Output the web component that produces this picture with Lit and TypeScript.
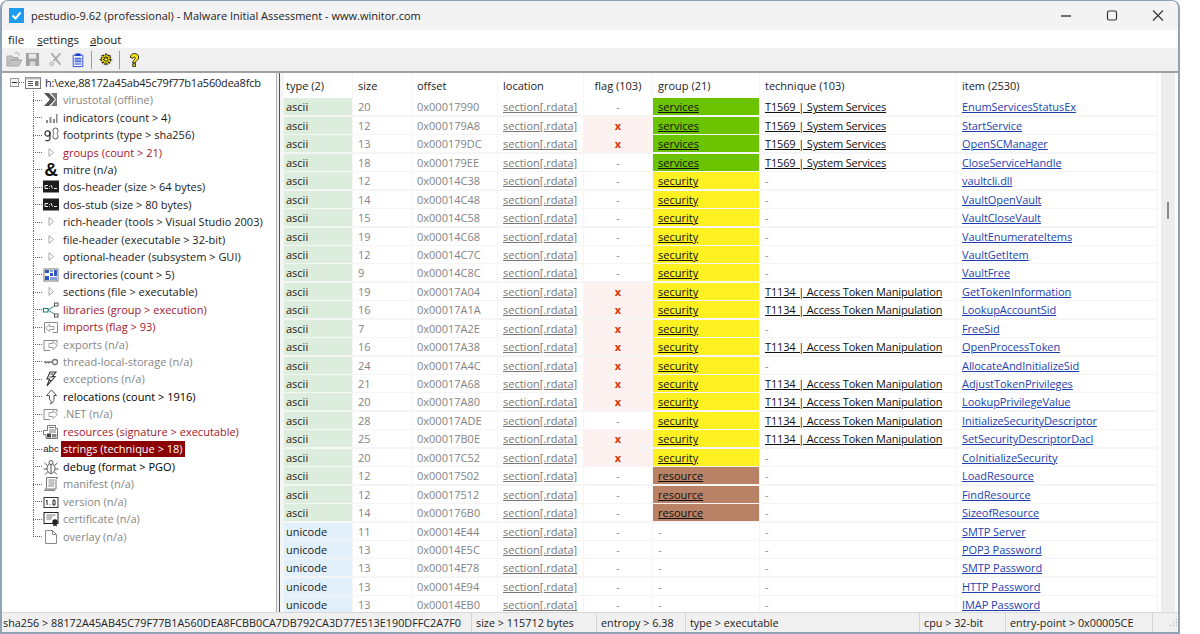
import { LitElement, html, css, svg } from "lit";
import { customElement } from "lit/decorators.js";

type Row = [string, string, string, boolean, string, string, string];
const T69 = "T1569 | System Services";
const T34 = "T1134 | Access Token Manipulation";
const rows: Row[] = [
  ["ascii","20","0x00017990",false,"services",T69,"EnumServicesStatusEx"],
  ["ascii","12","0x000179A8",true,"services",T69,"StartService"],
  ["ascii","13","0x000179DC",true,"services",T69,"OpenSCManager"],
  ["ascii","18","0x000179EE",false,"services",T69,"CloseServiceHandle"],
  ["ascii","12","0x00014C38",false,"security","","vaultcli.dll"],
  ["ascii","14","0x00014C48",false,"security","","VaultOpenVault"],
  ["ascii","15","0x00014C58",false,"security","","VaultCloseVault"],
  ["ascii","19","0x00014C68",false,"security","","VaultEnumerateItems"],
  ["ascii","12","0x00014C7C",false,"security","","VaultGetItem"],
  ["ascii","9","0x00014C8C",false,"security","","VaultFree"],
  ["ascii","19","0x00017A04",true,"security",T34,"GetTokenInformation"],
  ["ascii","16","0x00017A1A",true,"security",T34,"LookupAccountSid"],
  ["ascii","7","0x00017A2E",true,"security","","FreeSid"],
  ["ascii","16","0x00017A38",true,"security",T34,"OpenProcessToken"],
  ["ascii","24","0x00017A4C",true,"security","","AllocateAndInitializeSid"],
  ["ascii","21","0x00017A68",true,"security",T34,"AdjustTokenPrivileges"],
  ["ascii","20","0x00017A80",true,"security",T34,"LookupPrivilegeValue"],
  ["ascii","28","0x00017ADE",false,"security",T34,"InitializeSecurityDescriptor"],
  ["ascii","25","0x00017B0E",true,"security",T34,"SetSecurityDescriptorDacl"],
  ["ascii","20","0x00017C52",true,"security","","CoInitializeSecurity"],
  ["ascii","12","0x00017502",false,"resource","","LoadResource"],
  ["ascii","12","0x00017512",false,"resource","","FindResource"],
  ["ascii","14","0x000176B0",false,"resource","","SizeofResource"],
  ["unicode","11","0x00014E44",false,"","","SMTP Server"],
  ["unicode","13","0x00014E5C",false,"","","POP3 Password"],
  ["unicode","13","0x00014E78",false,"","","SMTP Password"],
  ["unicode","13","0x00014E94",false,"","","HTTP Password"],
  ["unicode","13","0x00014EB0",false,"","","IMAP Password"],
];

const headers: [string, string][] = [
  ["type (2)", "first"], ["size", ""], ["offset", ""], ["location", ""],
  ["flag (103)", "ctr"], ["group (21)", ""], ["technique (103)", ""], ["item (2530)", ""],
];

const ico = (body: unknown) => html`<svg class="ic" viewBox="0 0 16 16" width="16" height="16">${body}</svg>`;

const arrow = svg`<path d="M6 3.500v8l4.500-4z" fill="#fff" stroke="#a8a8a8"/>`;
const win = svg`<path d="M1 13.500v-10h13v3M1 13.500h6" fill="#fff" stroke="#8a8a8a"/><path d="M6 6.500h4v-2l4.500 4-4.500 4v-2H6z" fill="#fff" stroke="#8a8a8a" stroke-width=".8"/>`;
const dos = svg`<rect x="0" y="1.500" width="16" height="12" fill="#1c1c1c"/><path d="M2 6.500h3M2 6.500v3h3M6.500 7v.8M6.500 9v.7M8 6l1.500 3.500M11 9.500h3" stroke="#eee" stroke-width="1" fill="none"/>`;

const icons: Record<string, unknown> = {
  virustotal: ico(svg`<path d="M1 1h5l6 6.500-6 6.500H1l6-6.500z" fill="#555"/><path d="M8 1h6v13H8l5-6.500z" fill="#777"/>`),
  indicators: ico(svg`<path d="M3 10h2v3H3zM6.500 7h2v6h-2zM10 9h2v4h-2zM13 4h1.500v9H13z" fill="#8a8a8a"/>`),
  footprints: ico(svg`<circle cx="4.500" cy="6.500" r="2.600" fill="none" stroke="#333" stroke-width="1.200"/><path d="M7 5v6.500c0 2-2 2.500-4.500 2" fill="none" stroke="#333" stroke-width="1.200"/><path d="M10 3.500a2.500 2.500 0 0 1 5 0c0 1.500-.8 2-.8 3 0 1 .8 1.500.8 3a2.500 2.500 0 0 1-5 0c0-1.500.8-2 .8-3 0-1-.8-1.500-.8-3z" fill="#fff" stroke="#555"/>`),
  arrow: ico(arrow),
  dos: ico(dos),
  directories: ico(svg`<rect x="1" y="2" width="14" height="12" fill="#fff" stroke="#777"/><path d="M2 3h4v3H2zM7 6h3v3H7zM2 9h4v4H2zM11 3h3v6h-3z" fill="#2c55c0"/><path d="M7 3h3v2H7zM7 10h7v3H7z" fill="#8aa0d8"/>`),
  libraries: ico(svg`<path d="M5 8l8-5M5 8l8 5" stroke="#3a8a80" fill="none"/><rect x="0.500" y="6.500" width="4.500" height="3.500" fill="#fff" stroke="#1d7a70"/><rect x="11.500" y="1" width="3.500" height="3" fill="#fff" stroke="#555"/><rect x="11.500" y="12" width="3.500" height="3" fill="#fff" stroke="#555"/>`),
  imports: ico(svg`<path d="M2.500 13.500h-1v-10h13v10h-5" fill="#fff" stroke="#8a8a8a"/><path d="M11 7.500H6.500v-2l-4 3.500 4 3.500v-2H11z" fill="#fff" stroke="#8a8a8a" stroke-width=".8"/>`),
  exports: ico(win),
  tls: ico(svg`<circle cx="12" cy="8" r="2.500" fill="none" stroke="#777" stroke-width="1.300"/><path d="M1 8h8.500M3 8v1.500M5.500 8v1.500" stroke="#777" stroke-width="1.500" fill="none"/>`),
  exceptions: ico(svg`<path d="M7 1h6L9.500 5.500H12L4 15l2.500-7H4z" fill="#fff" stroke="#333" stroke-width="1.100"/><path d="M7.500 3h3M6.500 6h3M6 9.500h2" stroke="#333"/>`),
  relocations: ico(svg`<path d="M8.500 1l5 5.500H11V10c0 2-1 4-3.500 5C9 13 8 11 6.500 10.500V6.500H3.500z" fill="#fff" stroke="#555"/>`),
  resources: ico(svg`<path d="M4.500 1.500h8v3h2v10H3v-4H.5v-4h4z" fill="#fff" stroke="#777"/><path d="M6 3.500h5M6 6h7M6 8h7" stroke="#777"/><rect x="4" y="9.500" width="4" height="4" fill="#444"/><rect x="9" y="10" width="4.500" height="3.500" fill="#888"/>`),
  debug: ico(svg`<ellipse cx="8" cy="9.500" rx="4" ry="5" fill="#fff" stroke="#555"/><circle cx="8" cy="3.500" r="2" fill="#fff" stroke="#555"/><path d="M4.500 6.500L1.500 4M11.500 6.500L14.500 4M4 10H.5M12 10h3.500M4.500 13L2 15.500M11.500 13L14 15.500M8 5v9.500" stroke="#555" fill="none"/>`),
  manifest: ico(svg`<path d="M3.500 1.500h11l-1.500 2v9.500H2.500l1-2z" fill="#fff" stroke="#777"/><path d="M5.500 4h6M5.500 6h6M5.500 8h6M5 10h6" stroke="#888"/><path d="M1 13.500h11v1.500H1z" fill="#888"/>`),
  version: ico(svg`<rect x="1" y="3.500" width="14" height="10" fill="#fff" stroke="#333"/><path d="M4 6v5M3 7l1-1M7 10.500v.7M10 6.200h2v4.800h-2z" stroke="#222" fill="none"/>`),
  certificate: ico(svg`<rect x="1" y="1.500" width="14" height="11" fill="#fff" stroke="#222"/><path d="M3.500 4h9M3.500 6h6M3.500 8h5" stroke="#777"/><circle cx="12" cy="11" r="2.700" fill="#222"/><path d="M10.500 13l-.5 2.500 2-1 2 1-.5-2.500" fill="#222"/>`),
  overlay: ico(svg`<path d="M2.500 1.500h7l4 4v9h-11z" fill="#fff" stroke="#8a8a8a"/><path d="M9.500 1.500v4h4" fill="none" stroke="#8a8a8a"/>`),
};

type Node = [string, string, string];
const nodes: Node[] = [
  ["virustotal (offline)", "gray", "virustotal"],
  ["indicators (count > 4)", "", "indicators"],
  ["footprints (type > sha256)", "", "footprints"],
  ["groups (count > 21)", "red", "arrow"],
  ["mitre (n/a)", "", "amp"],
  ["dos-header (size > 64 bytes)", "", "dos"],
  ["dos-stub (size > 80 bytes)", "", "dos"],
  ["rich-header (tools > Visual Studio 2003)", "", "arrow"],
  ["file-header (executable > 32-bit)", "", "arrow"],
  ["optional-header (subsystem > GUI)", "", "arrow"],
  ["directories (count > 5)", "", "directories"],
  ["sections (file > executable)", "", "arrow"],
  ["libraries (group > execution)", "red", "libraries"],
  ["imports (flag > 93)", "red", "imports"],
  ["exports (n/a)", "gray", "exports"],
  ["thread-local-storage (n/a)", "gray", "tls"],
  ["exceptions (n/a)", "gray", "exceptions"],
  ["relocations (count > 1916)", "dark", "relocations"],
  [".NET (n/a)", "gray", "exports"],
  ["resources (signature > executable)", "red", "resources"],
  ["strings (technique > 18)", "sel", "abc"],
  ["debug (format > PGO)", "dark", "debug"],
  ["manifest (n/a)", "gray", "manifest"],
  ["version (n/a)", "gray", "version"],
  ["certificate (n/a)", "gray", "certificate"],
  ["overlay (n/a)", "gray", "overlay"],
];

@customElement("app-root")
export class AppRoot extends LitElement {
  static styles = css`
    :host { display: block; width: 1200px; height: 634px; background: #fff; font-family: "Open Sans", "Liberation Sans", sans-serif; font-size: 11px; color: #1a1a1a; overflow: hidden; }
    .window { width: 1180px; height: 634px; box-sizing: border-box; display: flex; flex-direction: column; border: 1px solid #8fa3b5; border-width: 1px 2px 2px 2px; border-radius: 8px 8px 0 0; background: #f0f0f0; overflow: hidden; }
    .title { height: 29px; flex: none; background: #f3f3f3; display: flex; align-items: center; padding-left: 7px; gap: 7px; font-size: 11px; color: #222; }
    .appicon { width: 15px; height: 15px; flex: none; }
    .title .txt { flex: 1; white-space: nowrap; }
    .caps { display: flex; align-items: center; margin-right: -3px; flex: none; }
    .caps svg { display: block; }
    .menu { height: 18px; flex: none; background: #fff; display: flex; align-items: center; padding-left: 6px; gap: 11px; font-size: 11.5px; }
    .menu span:first-child { margin-right: 2px; }
    .toolbar { height: 23px; flex: none; background: #f0f0f0; display: flex; align-items: center; padding-left: 3px; border-bottom: 2px solid #a2a2a2; }
    .toolbar svg { display: block; flex: none; }
    .sep { width: 1px; height: 18px; background: #9a9a9a; flex: none; }
    .ml { margin-left: 6px; }
    .main { flex: 1; min-height: 0; display: flex; background: #f0f0f0; }
    .tree { width: 274px; flex: none; background: #fff; border-right: 1px solid #b0b0b0; padding-top: 1px; overflow: hidden; }
    .root { height: 17.46px; display: flex; align-items: center; white-space: nowrap; padding-left: 8px; }
    .root .lbl { margin-left: 2px; letter-spacing: -0.2px; }
    .exp { width: 7px; height: 7px; border: 1px solid #9a9a9a; flex: none; position: relative; background: #f4f4f4; }
    .exp::after { content: ""; position: absolute; left: 1px; right: 1px; top: 3px; height: 1px; background: #223; }
    .dots { width: 6px; flex: none; height: 1px; background: repeating-linear-gradient(to right, #666 0 1px, transparent 1px 2px); }
    .n { height: 17.46px; display: flex; align-items: center; white-space: nowrap; }
    .guide { width: 10px; height: 100%; margin-left: 31px; flex: none; background:
      repeating-linear-gradient(to bottom, #666 0 1px, transparent 1px 2px) left top / 1px 100% no-repeat,
      repeating-linear-gradient(to right, #666 0 1px, transparent 1px 2px) left center / 100% 1px no-repeat; }
    .n.last .guide { background:
      repeating-linear-gradient(to bottom, #666 0 1px, transparent 1px 2px) left top / 1px 50% no-repeat,
      repeating-linear-gradient(to right, #666 0 1px, transparent 1px 2px) left center / 100% 1px no-repeat; }
    .iconbox { width: 16px; height: 16px; flex: none; display: flex; align-items: center; justify-content: center; }
    .ic { display: block; }
    .amp { font-family: "Liberation Sans", sans-serif; font-weight: 700; font-size: 19px; line-height: 16px; color: #111; }
    .abc { font-family: "Liberation Sans", sans-serif; font-size: 9.500px; line-height: 16px; color: #222; }
    .lbl { margin-left: 2px; padding: 0 2px; line-height: 16px; }
    .gray { color: #868686; }
    .red { color: #a3172c; }
    .dark { color: #000; }
    .sel { background: #8b0000; color: #fff; }
    .pane { flex: 1; display: flex; min-width: 0; margin-left: 2px; border-left: 1px solid #555; background: #fff; overflow: hidden; }
    .grid { flex: none; width: 878px; box-sizing: border-box; padding-left: 4px; display: grid;
      grid-template-columns: 68px 58px 85px 85px 68px 106px 196px 200px;
      grid-template-rows: 24px; grid-auto-rows: 17px; column-gap: 1px; row-gap: 1.440px; background: #f5f5f5; overflow: hidden; align-content: start; }
    .h, .c { background: #fff; padding-left: 5px; white-space: nowrap; display: flex; align-items: center; line-height: 17px; overflow: hidden; }
    .h { color: #222; margin-bottom: -1.440px; }
    .h.first, .c.type { padding-left: 2px; }
    .h.ctr, .c.flag { justify-content: center; padding-left: 0; }
    .c.type { background: #dcedde; color: #222; }
    .c.type.u { background: #e1f0fb; }
    .c.num { color: #838383; }
    .c.loc { color: #777; text-decoration: underline; }
    .dash { color: #8a8a8a; }
    .c.flag.on { background: #fdf2f0; }
    .x { color: #d8320a; font-weight: 700; font-size: 11px; }
    .services { background: #6cc400; }
    .security { background: #fff022; }
    .resource { background: #b98266; }
    .g { color: #111; text-decoration: underline; }
    .t { color: #111; text-decoration: underline; letter-spacing: -0.15px; }
    .i { color: #1c3fb0; text-decoration: underline; letter-spacing: -0.07px; }
    .scroll { width: 14px; flex: none; margin: 0 3px; background: #ededed; display: flex; justify-content: center; padding-top: 129px; box-sizing: border-box; }
    .thumb { width: 2px; height: 17px; background: #8a8a8a; }
    .status { height: 19px; flex: none; background: #f0f0f0; display: flex; align-items: center; border-top: 1px solid #d8d8d8; color: #222; font-size: 10.8px; white-space: nowrap; }
    .status span { display: flex; align-items: center; height: 100%; padding-left: 4px; box-sizing: border-box; flex: none; border-right: 1px solid #d4d4d4; overflow: hidden; }
    .status span:first-child { padding-left: 1px; }
    .status svg { margin-left: 13px; }
  `;

  private toolbar() {
    return html`<div class="toolbar">
      <svg width="18" height="16" viewBox="0 0 18 16"><path d="M2 14V4h5l1 1.500h5V8H5.500L2 14h11.500L17 8H6" fill="#c4c4c4" stroke="#a8a8a8"/><path d="M10 1c2-1 4 0 4 2.500" stroke="#a8a8a8" fill="none"/></svg>
      <svg style="margin-left:2px" width="15" height="15" viewBox="0 0 16 16"><path d="M1 1h14v14H1z" fill="#a0a0a0"/><rect x="4" y="2" width="8" height="5" fill="#e8e8e8"/><rect x="5" y="10" width="6" height="5" fill="#d8d8d8"/></svg>
      <svg style="margin-left:9px" width="14" height="15" viewBox="0 0 16 16"><path d="M3 1l10 13M13 1L5 10" stroke="#a8a8a8" stroke-width="2" fill="none"/><circle cx="3" cy="13" r="2" fill="none" stroke="#999"/></svg>
      <svg style="margin-left:8px" width="14" height="16" viewBox="0 0 16 16"><path d="M2.500 2.500h11v13h-11z" fill="#fff" stroke="#1a3fd0"/><rect x="5" y="0.500" width="6" height="3" fill="#1a3fd0"/><path d="M4 6h8M4 8h8M4 10h8M4 12.500h8" stroke="#1a3fd0" stroke-width="1.200"/></svg>
      <div class="sep ml"></div>
      <svg style="margin-left:7px" width="14" height="15" viewBox="0 0 16 16"><circle cx="8" cy="8" r="5.500" fill="#e8d800" stroke="#222" stroke-width="1.500" stroke-dasharray="2 1"/><path d="M8 .8v14.400M.8 8h14.400M3 3l10 10M13 3L3 13" stroke="#222" stroke-width="1.300" stroke-dasharray="1.500 2"/><circle cx="8" cy="8" r="2" fill="#f5ee20" stroke="#222"/></svg>
      <div class="sep ml"></div>
      <svg style="margin-left:9px" width="11" height="16" viewBox="0 0 13 17"><path d="M1.500 5.500a5 4.500 0 1 1 8 3.500c-1.500 1-2 1.500-2 3H4.500c0-2.500 1-3.500 2.500-4.500 1-.7.800-2.500-.7-2.500-1 0-1.500.7-1.500 1.500z" fill="#ffe800" stroke="#111"/><rect x="4.500" y="13" width="3.200" height="3" fill="#ffe800" stroke="#111"/></svg>
    </div>`;
  }

  private nodeIcon(k: string) {
    if (k === "amp") return html`<span class="amp">&</span>`;
    if (k === "abc") return html`<span class="abc">abc</span>`;
    return icons[k];
  }

  render() {
    return html`<div class="window">
      <div class="title">
        <svg class="appicon" viewBox="0 0 15 15"><rect width="15" height="15" fill="#1c9cee"/><path d="M3.500 7.500l3 3 5-6" stroke="#fff" stroke-width="2" fill="none"/></svg>
        <div class="txt">pestudio-9.62 (professional) - Malware Initial Assessment - www.winitor.com</div>
        <div class="caps">
          <svg width="46" height="29" viewBox="0 0 46 29"><path d="M18 15h10" stroke="#444" stroke-width="1.500"/></svg>
          <svg width="46" height="29" viewBox="0 0 46 29"><rect x="18.500" y="10" width="9" height="9" rx="1.500" fill="none" stroke="#333" stroke-width="1.200"/></svg>
          <svg width="46" height="29" viewBox="0 0 46 29"><path d="M18 9.500l10 10M28 9.500l-10 10" stroke="#333" stroke-width="1.100"/></svg>
        </div>
      </div>
      <div class="menu"><span>file</span><span><u>s</u>ettings</span><span><u>a</u>bout</span></div>
      ${this.toolbar()}
      <div class="main">
        <div class="tree">
          <div class="root"><span class="exp"></span><span class="dots"></span>
            <svg width="16" height="16" viewBox="0 0 16 16"><rect x="0.500" y="2.500" width="15" height="11" fill="#fff" stroke="#777"/><rect x="0.500" y="2.500" width="15" height="2" fill="#bbb"/><path d="M3 6.500h5M3 8.500h5M3 10.500h5" stroke="#555"/><rect x="10" y="6" width="3.500" height="5" fill="#777"/></svg>
            <span class="lbl">h:\\exe,88172a45ab45c79f77b1a560dea8fcb</span></div>
          ${nodes.map((n, i) => html`<div class="n ${i === nodes.length - 1 ? "last" : ""}">
            <span class="guide"></span>
            <span class="iconbox">${this.nodeIcon(n[2])}</span>
            <span class="lbl ${n[1]}">${n[0]}</span>
          </div>`)}
        </div>
        <div class="pane">
          <div class="grid">
            ${headers.map((h) => html`<div class="h ${h[1]}">${h[0]}</div>`)}
            ${rows.map((r) => html`
              <div class="c type ${r[0] === "unicode" ? "u" : ""}">${r[0]}</div>
              <div class="c num">${r[1]}</div>
              <div class="c num">${r[2]}</div>
              <div class="c loc">section[.rdata]</div>
              <div class="c flag ${r[3] ? "on" : ""}">${r[3] ? html`<span class="x">x</span>` : html`<span class="dash">-</span>`}</div>
              <div class="c ${r[4]}">${r[4] ? html`<span class="g">${r[4]}</span>` : html`<span class="dash">-</span>`}</div>
              <div class="c">${r[5] ? html`<span class="t">${r[5]}</span>` : html`<span class="dash">-</span>`}</div>
              <div class="c"><span class="i">${r[6]}</span></div>
            `)}
          </div>
          <div class="scroll"><div class="thumb"></div></div>
        </div>
      </div>
      <div class="status">
        <span style="width:470px">sha256 &gt; 88172A45AB45C79F77B1A560DEA8FCBB0CA7DB792CA3D77E513E190DFFC2A7F0</span>
        <span style="width:125px">size &gt; 115712 bytes</span>
        <span style="width:89px">entropy &gt; 6.38</span>
        <span style="width:234px">type &gt; executable</span>
        <span style="width:86px">cpu &gt; 32-bit</span>
        <span style="width:147px">entry-point &gt; 0x00005CE</span>
        <svg width="12" height="12" viewBox="0 0 12 12"><path d="M10 2h1v1h-1zM7 5h1v1H7zM10 5h1v1h-1zM4 8h1v1H4zM7 8h1v1H7zM10 8h1v1h-1z" fill="#aaa"/></svg>
      </div>
    </div>`;
  }
}
